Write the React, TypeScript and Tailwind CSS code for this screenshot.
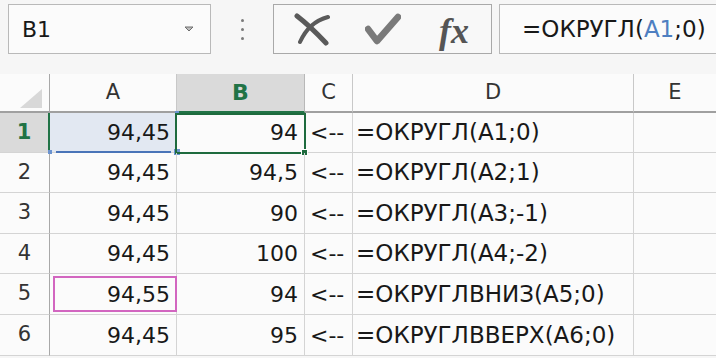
import React from "react";

const FONT = { fontFamily: '"DejaVu Sans", "Open Sans", sans-serif' };

const rows = [
  { n: "1", a: "94,45", b: "94", d: "=ОКРУГЛ(A1;0)", h: "h-[40px]" },
  { n: "2", a: "94,45", b: "94,5", d: "=ОКРУГЛ(A2;1)", h: "h-[40px]" },
  { n: "3", a: "94,45", b: "90", d: "=ОКРУГЛ(A3;-1)", h: "h-[41px]" },
  { n: "4", a: "94,45", b: "100", d: "=ОКРУГЛ(A4;-2)", h: "h-[40px]" },
  { n: "5", a: "94,55", b: "94", d: "=ОКРУГЛВНИЗ(A5;0)", h: "h-[41px]" },
  { n: "6", a: "94,45", b: "95", d: "=ОКРУГЛВВЕРХ(A6;0)", h: "h-[41px]" },
];

function CancelIcon() {
  return (
    <svg width="36" height="34" viewBox="0 0 36 34" fill="none">
      <path d="M3 4 Q 16 14 32 31" stroke="#5a5a5a" strokeWidth="5" strokeLinecap="round" />
      <path d="M6 30 Q 15 10 34 5" stroke="#5a5a5a" strokeWidth="4" strokeLinecap="round" />
    </svg>
  );
}

function CheckIcon() {
  return (
    <svg width="36" height="32" viewBox="0 0 36 32" fill="none">
      <path d="M3 16 L 12 28 L 33 4" stroke="#7a7a7a" strokeWidth="6.5" strokeLinecap="round" strokeLinejoin="round" />
    </svg>
  );
}

export default function App() {
  return (
    <div className="w-[716px] h-[358px] overflow-hidden bg-[#f6f6f6] text-[#181818]" style={FONT}>
      {/* formula bar */}
      <div className="flex h-[74px] items-start pt-[4px] pl-[8px]">
        <div className="flex h-[50px] w-[203px] items-center justify-between border border-[#b9b9b9] bg-[#fbfbfb] pl-[13px] pr-[16px]">
          <span className="text-[22px]">B1</span>
          <svg width="10" height="6" viewBox="0 0 10 6">
            <path d="M1 1 L9 1 L5 5 Z" fill="#bdbdbd" stroke="#6e6e6e" strokeWidth="1" />
          </svg>
        </div>
        <div className="flex h-[50px] w-[62px] flex-col items-center justify-center gap-[6px]">
          <span className="h-[3px] w-[3px] rounded-full bg-[#7a7a7a]" />
          <span className="h-[3px] w-[3px] rounded-full bg-[#7a7a7a]" />
          <span className="h-[3px] w-[3px] rounded-full bg-[#7a7a7a]" />
        </div>
        <div className="flex h-[50px] w-[219px] items-center border border-[#a9a9a9] bg-[#f8f8f8] pl-[20px]">
          <CancelIcon />
          <div className="ml-[35px]"><CheckIcon /></div>
          <span
            className="ml-[38px] mt-[4px] text-[36px] font-bold italic leading-none text-[#555]"
            style={{ fontFamily: '"Liberation Serif", "DejaVu Serif", serif' }}
          >
            fx
          </span>
        </div>
        <div className="ml-[7px] flex h-[50px] flex-1 items-center border border-r-0 border-[#b9b9b9] bg-[#fbfbfb] pl-[22px] text-[23px]">
          <span>=ОКРУГЛ(</span>
          <span className="text-[#4e7fc1]">A1</span>
          <span>;0)</span>
        </div>
      </div>

      {/* sheet */}
      <div className="grid grid-cols-[50px_127px_128px_48px_281px_1fr] bg-[#fbfbfb]">
        {/* header row */}
        <div className="relative h-[39px] border-r border-b-2 border-[#a8a8a8] border-b-[#a0a0a0]">
          <svg className="absolute left-[20px] top-[15px]" width="22" height="19" viewBox="0 0 22 19">
            <path d="M22 0 L22 19 L0 19 Z" fill="#d8d8d8" />
          </svg>
        </div>
        <div className="flex h-[39px] items-center justify-center border-r border-b-2 border-[#c8c8c8] border-b-[#a0a0a0] text-[21px] text-[#333]">A</div>
        <div className="flex h-[39px] items-center justify-center border-r border-b-2 border-[#b8b8b8] border-b-[#217346] bg-[#dadada] text-[22px] font-bold text-[#217346]">B</div>
        <div className="flex h-[39px] items-center justify-center border-r border-b-2 border-[#c8c8c8] border-b-[#a0a0a0] text-[21px] text-[#333]">C</div>
        <div className="flex h-[39px] items-center justify-center border-r border-b-2 border-[#c8c8c8] border-b-[#a0a0a0] text-[21px] text-[#333]">D</div>
        <div className="flex h-[39px] items-center justify-center border-b-2 border-b-[#a0a0a0] text-[21px] text-[#333]">E</div>

        {rows.map((r) => {
          const first = r.n === "1";
          return (
            <React.Fragment key={r.n}>
              <div
                className={`flex ${r.h} items-center justify-center border-b border-[#d4d4d4] text-[21px] ${
                  first
                    ? "border-r-2 border-r-[#217346] bg-[#dadada] font-bold text-[#217346]"
                    : "border-r border-r-[#a8a8a8] text-[#333]"
                }`}
              >
                {r.n}
              </div>
              <div
                className={`relative flex ${r.h} items-center justify-end border-r border-b border-[#d4d4d4] pr-[6px] text-[22px] ${
                  first ? "bg-[#e2e8f2]" : ""
                }`}
              >
                {first && (
                  <>
                    <span className="absolute bottom-[-1px] left-[6px] right-[5px] h-[2px] bg-[#4a74b8]" />
                    <span className="absolute bottom-[-3px] right-[-4px] h-[6px] w-[6px] bg-[#6b93cf]" />
                    <span className="absolute top-[-2px] right-[-3px] h-[4px] w-[4px] bg-[#6b93cf]" />
                    <span className="absolute bottom-[-2px] left-[-2px] h-[4px] w-[4px] bg-[#6b93cf]" />
                  </>
                )}
                {r.n === "5" && (
                  <span className="absolute left-[3px] right-[-1px] top-[2px] bottom-[2px] border-2 border-[#d266c0]" />
                )}
                <span className="relative">{r.a}</span>
              </div>
              <div
                className={`relative flex ${r.h} items-center justify-end border-r border-b border-[#d4d4d4] pr-[6px] text-[22px]`}
              >
                {first && (
                  <>
                    <span className="absolute left-[-2px] right-[-2px] top-0 bottom-[-2px] border-2 border-[#1e6b3e]" />
                    <span className="absolute bottom-[-4px] right-[-4px] h-[7px] w-[7px] border border-white bg-[#1e6b3e]" />
                  </>
                )}
                <span className="relative">{r.b}</span>
              </div>
              <div className={`flex ${r.h} items-center border-r border-b border-[#d4d4d4] pl-[5px] text-[22px]`}>
                &lt;--
              </div>
              <div className={`flex ${r.h} items-center border-r border-b border-[#d4d4d4] pl-[3px] text-[23px]`}>
                {r.d}
              </div>
              <div className={`${r.h} border-b border-[#d4d4d4]`} />
            </React.Fragment>
          );
        })}
      </div>
    </div>
  );
}
